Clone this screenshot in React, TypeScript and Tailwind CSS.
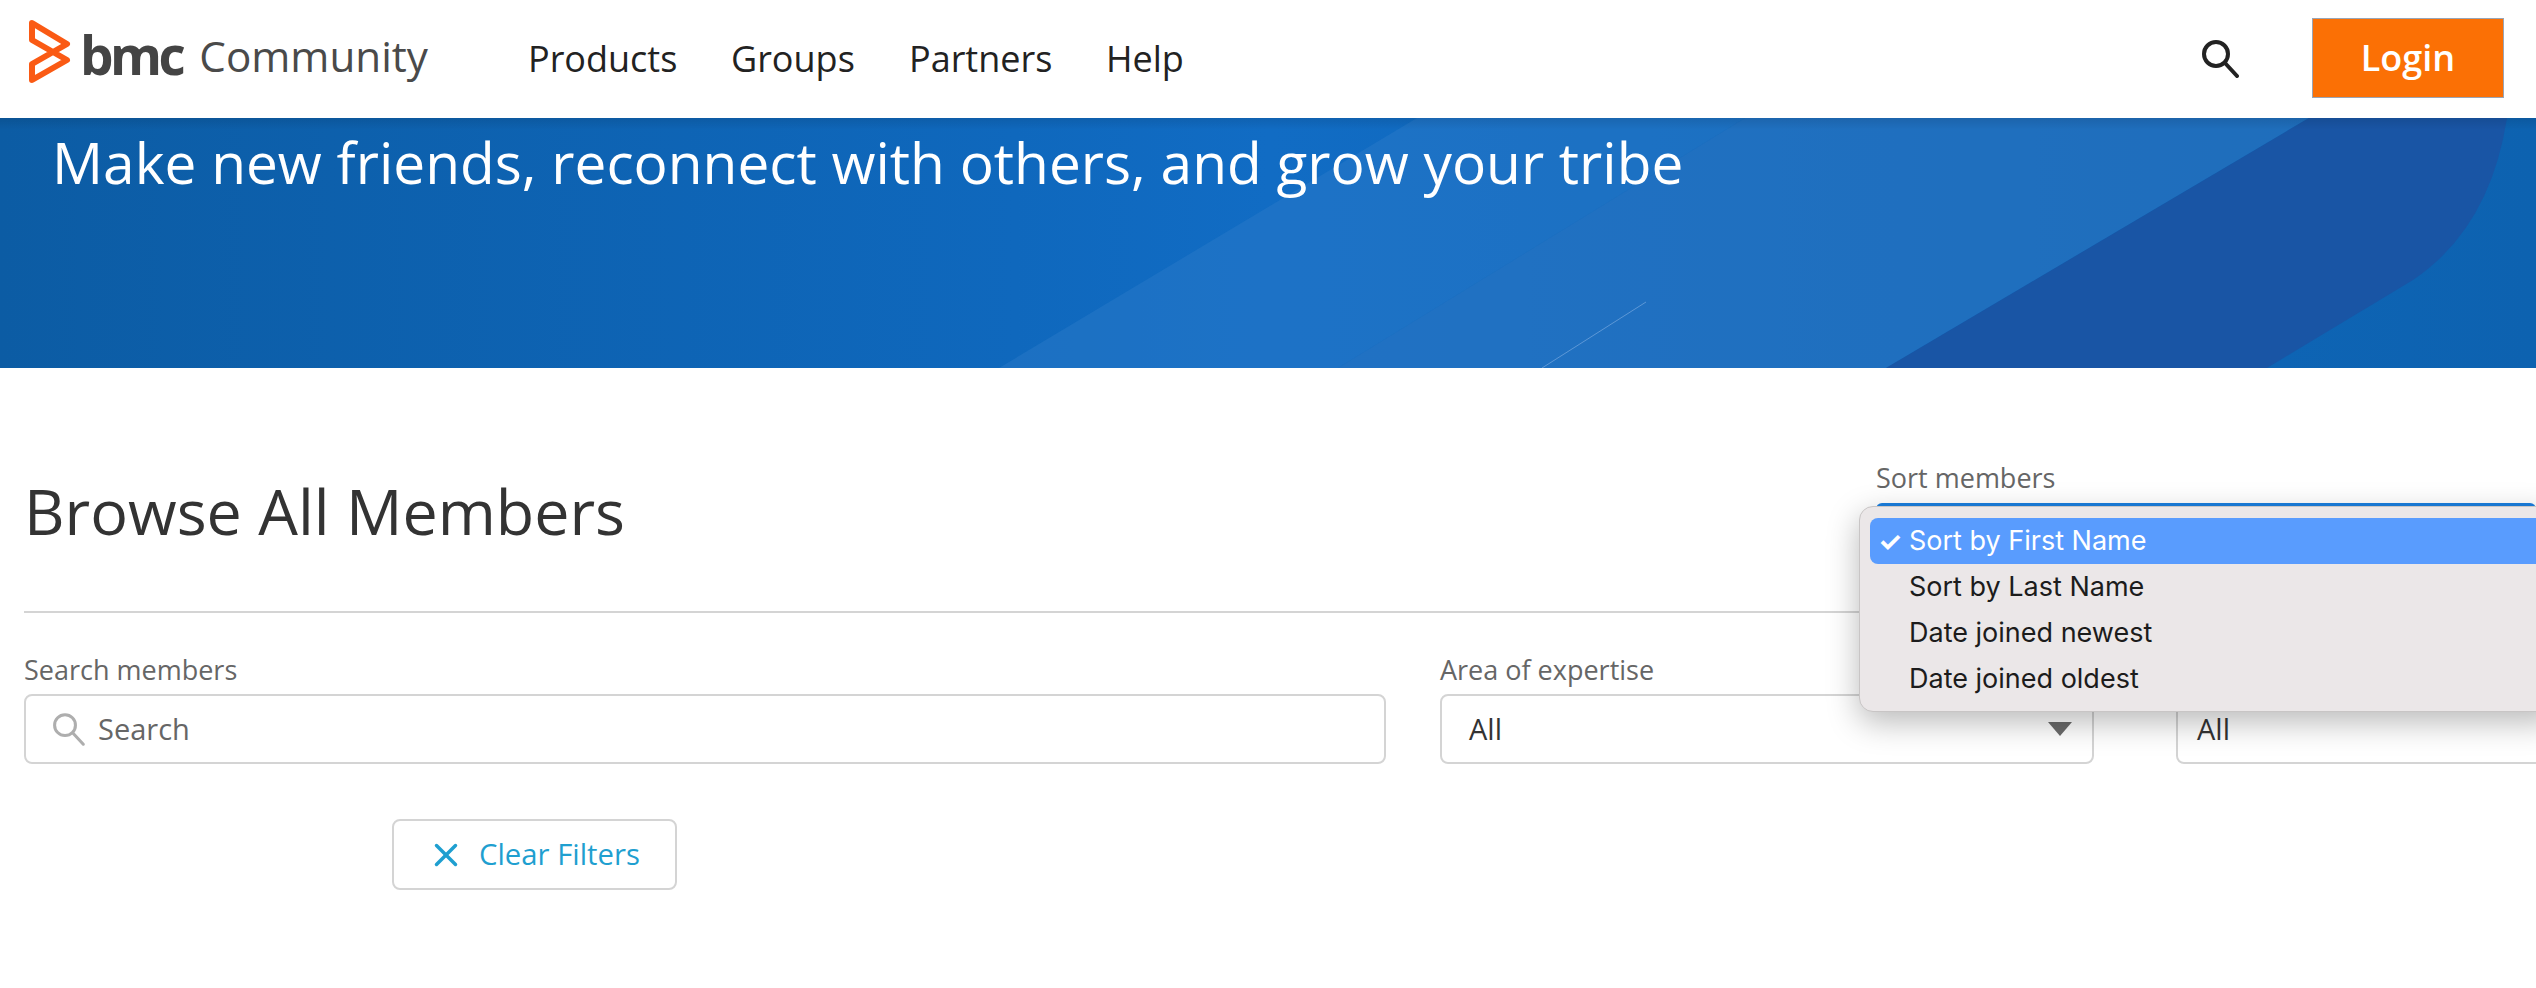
import React from 'react';
import { X } from 'lucide-react';

const navItems = [
    { label: 'Products', className: 'w-[203px]' },
    { label: 'Groups', className: 'w-[178px]' },
    { label: 'Partners', className: 'w-[197px]' },
    { label: 'Help', className: '' },
];

const sortOptions = ['Sort by First Name', 'Sort by Last Name', 'Date joined newest', 'Date joined oldest'];

const BmcLogo = () => (
    <svg width="60" height="85" viewBox="0 0 60 85" fill="none" className="mb-[13px] shrink-0">
        <path
            d="M12 13 L47 34 L12 54 L12 70 L47 50 L12 30 Z"
            stroke="#fa5a14"
            strokeWidth="6"
            strokeLinejoin="round"
        />
    </svg>
);

const SearchIcon = ({ size, stroke, width }: { size: number; stroke: string; width: number }) => (
    <svg width={size} height={size} viewBox="0 0 36 38" fill="none" className="shrink-0">
        <circle cx="14" cy="14" r="12" stroke={stroke} strokeWidth={width} />
        <path d="M23 23 L35 36" stroke={stroke} strokeWidth={width} strokeLinecap="round" />
    </svg>
);

const Header = () => (
    <header className="flex h-[118px] items-center bg-white">
        <div className="ml-[20px] flex items-center">
            <BmcLogo />
            <span className="mb-[10px] text-[53px] leading-none font-bold tracking-[-3.5px] text-[#444444] font-['Open_Sans',sans-serif]">
                bmc
            </span>
            <span className="mb-[6px] ml-[17px] text-[42.2px] leading-none text-[#4a4a4a] font-['Open_Sans',sans-serif]">Community</span>
        </div>
        <nav className="ml-[100px] flex items-center">
            {navItems.map((item) => (
                <a key={item.label} className={`text-[36px] text-[#222222] ${item.className}`}>
                    {item.label}
                </a>
            ))}
        </nav>
        <div className="ml-auto">
            <SearchIcon size={38} stroke="#222222" width={4} />
        </div>
        <button className="mr-[32px] mb-[2px] ml-[73px] h-[80px] w-[192px] border border-[#9aa5b5] bg-[#fb7005] text-[36px] font-semibold text-white">
            Login
        </button>
    </header>
);

const Hero = () => (
    <section className="relative h-[250px] overflow-hidden bg-[linear-gradient(90deg,#0c5ca4_0%,#0f68bd_40%,#116cc4_50%,#0d62b0_100%)]">
        {/* background shapes */}
        <svg className="absolute inset-0 h-full w-full" viewBox="0 0 2536 250" preserveAspectRatio="none">
            <path d="M1417 0 L1745 0 L1338 250 L999 250 Z" fill="#2f7ccb" opacity="0.4" />
            <path d="M1745 0 L2309 0 L1886 250 L1338 250 Z" fill="#2f78c4" opacity="0.5" />
            <path d="M2309 0 L2507 0 Q2490 110 2413 162 L2267 250 L1886 250 Z" fill="#1955a5" />
            <path d="M1646 184 L1542 250" stroke="#5c97d6" strokeWidth="1" />
        </svg>
        <div className="absolute inset-x-0 top-0 h-[12px] bg-gradient-to-b from-black/10 to-transparent" />
        <h2 className="relative pt-[9px] pl-[52px] text-[56.8px] leading-[70px] text-white">
            Make new friends, reconnect with others, and grow your tribe
        </h2>
    </section>
);

const SortMenu = () => (
    <div className="absolute top-[46px] left-[-17px] z-10 h-[206px] w-[700px] rounded-[14px] border border-[#c8c5c5] bg-[#ebe7e8] pt-[11px] pl-[10px] text-[#1c1c1c] shadow-[0_10px_32px_rgba(0,0,0,0.28)] font-['Inter',sans-serif]">
        {sortOptions.map((option, i) => (
            <div
                key={option}
                className={`flex h-[46px] items-center text-[27px] ${i === 0 ? 'rounded-[8px] bg-[#599cfe] text-white' : ''}`}
            >
                <span className="w-[39px] pl-[8px] text-[27px] leading-none font-bold">{i === 0 ? '✓' : ''}</span>
                <span>{option}</span>
            </div>
        ))}
    </div>
);

const Field = ({ label, className, children }: { label?: string; className: string; children: React.ReactNode }) => (
    <div className={`shrink-0 ${className}`}>
        <div className="h-[43px] text-[27px] leading-[38px] text-[#666666]">{label}</div>
        <div className="flex h-[70px] items-center rounded-[8px] border-2 border-[#d4d4d4] bg-white text-[29px]">{children}</div>
    </div>
);

const Main = () => (
    <main className="pl-[24px]">
        <div className="flex h-[245px] border-b-2 border-[#d4d4d4]">
            <h1 className="pt-[104px] text-[62.8px] leading-[78px] text-[#333333]">Browse All Members</h1>
            <div className="relative mt-[92px] ml-auto w-[660px] shrink-0">
                <div className="text-[27px] leading-[36px] text-[#666666]">Sort members</div>
                <div className="absolute top-[43px] left-0 h-[6px] w-full rounded-t-[8px] bg-[#1a7fe0]" />
                <SortMenu />
            </div>
        </div>
        <div className="mt-[38px] flex">
            <Field label="Search members" className="w-[1362px]">
                <span className="ml-[26px]">
                    <SearchIcon size={33} stroke="#aeaeae" width={3.5} />
                </span>
                <span className="ml-[13px] text-[#666666]">Search</span>
            </Field>
            <Field label="Area of expertise" className="ml-[54px] w-[654px]">
                <span className="ml-[27px] text-[#333333]">All</span>
                <span className="mr-[20px] ml-auto h-0 w-0 border-x-[12px] border-t-[14px] border-x-transparent border-t-[#6b6b6b]" />
            </Field>
            <Field className="ml-[82px] w-[500px]">
                <span className="ml-[19px] text-[#333333]">All</span>
            </Field>
        </div>
        <button className="mt-[55px] ml-[368px] flex h-[71px] w-[285px] items-center rounded-[8px] border-2 border-[#d4d4d4] bg-white text-[29.3px] text-[#1f9fd0]">
            <X className="ml-[33px]" size={38} strokeWidth={2.2} />
            <span className="ml-[14px]">Clear Filters</span>
        </button>
    </main>
);

export default function App() {
    return (
        <div className="h-screen w-full overflow-hidden bg-white font-['Open_Sans',sans-serif]">
            <Header />
            <Hero />
            <Main />
        </div>
    );
}
